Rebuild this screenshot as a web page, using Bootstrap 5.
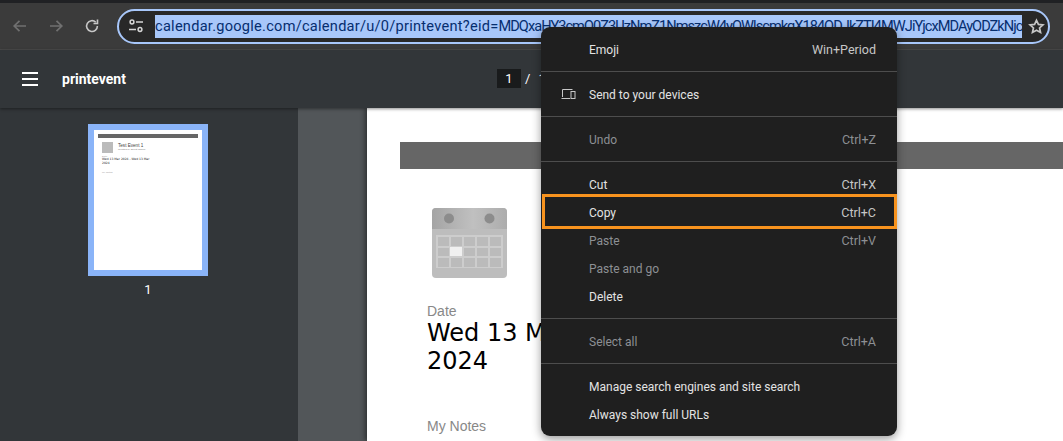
<!DOCTYPE html>
<html lang="en"><head><meta charset="utf-8"><title>printevent</title>
<link href="https://cdn.jsdelivr.net/npm/bootstrap@5.3.0/dist/css/bootstrap.min.css" rel="stylesheet">
<style>
html,body{height:441px;overflow:hidden;margin:0}
body{background:#323639;font-family:"Roboto","Open Sans",sans-serif;position:relative}
.top-strip{height:3px;background:#202124}
.chrome-bar{height:47px;background:#3b3b3b;border-bottom:1px solid #4a4a4a}
.nav-ic{width:40px;height:47px}
.omni{position:absolute;left:117px;top:9px;width:933px;height:35px;border:2px solid #a8c7fa;border-radius:18px;background:#282828}
.tune{position:absolute;left:10px;top:8px}
.url{position:absolute;left:36px;top:4px;width:867px;height:23px;background:#a8c7fa;color:#062e6f;font-size:14.6px;line-height:23px;white-space:nowrap;overflow:hidden;letter-spacing:.25px}
.url-tail{letter-spacing:-.97px}
.star{position:absolute;left:909px;top:7px}
.pdf-bar{height:58px;background:#323639;color:#fff;position:relative;z-index:1;box-shadow:0 1px 3px rgba(0,0,0,.45)}
.doc-title{font-weight:700;font-size:14px;margin-left:24px}
.pager{position:absolute;left:497px;top:69px;color:#fff;font-size:13px;line-height:19px;z-index:2}
.pg-box{width:24px;height:19px;background:#191b1c;text-align:center}
.main-row{height:333px}
.side{width:296px;margin-right:2px;background:#323639;color:#fff;padding-top:16px}
.thumb{width:120px;height:152px;border:6px solid #8ab4f8;background:#fff;padding:4px;line-height:1}
.thumb-head{height:4px;background:#666}
.thumb-body{display:flex;gap:5px;padding:4px 4px 0}
.thumb-ico{width:11px;height:11px;background:#bbb;flex:none}
.thumb-name{font:400 4.600px/5px "Liberation Sans",sans-serif;color:#444;margin-top:1px}
.thumb-sub{font:400 2.500px/3px "Liberation Sans",sans-serif;color:#777}
.thumb-lab{font:2.500px/3px "Liberation Sans",sans-serif;color:#999;padding:2px 4px 0}
.thumb-date{font:3px/3.600px "DejaVu Sans",sans-serif;color:#222;padding:0 40px 0 4px}
.thumb-note{font:2.500px/3px "Liberation Sans",sans-serif;color:#999;padding:6px 4px 0}
.thumb-num{font-size:13px;margin-top:4px}
.gutter{background:#525659;padding-left:69px}
.sheet{background:#fff;height:333px;box-shadow:-2px 0 5px rgba(0,0,0,.45);padding:34px 0 0 33px;color:#000}
.sheet-head{height:27px;background:#666}
.cal{margin:39px 0 0 32px;display:block}
.ev-label{font:14px/17px "Liberation Sans",sans-serif;color:#888;margin:25px 0 0 27px}
.ev-date{font:24px/28px "DejaVu Sans",sans-serif;color:#000;margin:-1px 0 0 27px;width:440px}
.notes{margin-top:43px}
.ctx{position:absolute;left:541px;top:27px;width:356px;height:409px;background:#1f1f1f;border-radius:9px;padding:8px 0;box-shadow:0 3px 10px rgba(0,0,0,.4);font-size:12px;color:#e3e3e3;z-index:3}
.ctx-item{height:28px;padding:2px 21px 0 48px;display:flex;justify-content:space-between;align-items:center;position:relative}
.ctx-key{color:#c7c7c7;font-size:12.500px}
.ctx-off{color:#8d9094}
.ctx-off .ctx-key{color:#8d9094}
.ctx-sep{height:1px;background:#4d4d4d;margin:8px 0}
.ctx-dev{position:absolute;left:20px;top:8px}
.hl{position:absolute;left:1px;top:167px;width:355px;height:35px;border:3px solid #f7931e;pointer-events:none}
</style></head>
<body>
<div class="top-strip"></div>
<div class="chrome-bar d-flex align-items-center">
  <div class="nav-ic d-flex align-items-center justify-content-center"><svg width="16" height="16" viewBox="0 0 16 16" fill="none" stroke="#707070" stroke-width="1.700"><path d="M14 8H2.500M7.500 2.800 2.200 8l5.300 5.200"/></svg></div>
  <div class="nav-ic d-flex align-items-center justify-content-center" style="margin-left:-4px"><svg width="16" height="16" viewBox="0 0 16 16" fill="none" stroke="#707070" stroke-width="1.700"><path d="M2 8h11.500M8.500 2.800 13.800 8l-5.300 5.200"/></svg></div>
  <div class="nav-ic d-flex align-items-center justify-content-center" style="margin-left:-4px"><svg width="16" height="16" viewBox="0 0 16 16" fill="none" stroke="#c7c7c7" stroke-width="1.600"><path d="M13.400 8a5.400 5.400 0 1 1-1.600-3.800"/><path d="M13.500 1.500v4h-4"/></svg></div>
</div>
<div class="omni">
  <svg class="tune" width="14" height="14" viewBox="0 0 14 14" fill="none" stroke="#d5d5d5" stroke-width="1.500"><circle cx="3" cy="3" r="1.900"/><path d="M7 3h7M0 10.500h7"/><circle cx="11" cy="10.500" r="1.900"/></svg>
  <div class="url">calendar.google.com/calendar/u/0/printevent?eid=<span class="url-tail">MDQxaHY3cmQ0Z3UzNmZ1NmszcW4yOWlscmkgX184ODJkZTI4MWJiYjcxMDAyODZkNjc</span></div>
  <svg class="star" width="17" height="17" viewBox="0 0 24 24" fill="none" stroke="#c7c7c7" stroke-width="2.400"><path d="M12 3.200l2.700 5.900 6.400.7-4.800 4.300 1.400 6.300L12 17.200l-5.700 3.200 1.400-6.300-4.800-4.300 6.400-.7z"/></svg>
</div>
<div class="pdf-bar d-flex align-items-center" style="padding-left:22px">
  <svg width="16" height="14" viewBox="0 0 16 14" fill="#fff"><rect width="16" height="2" y="0"/><rect width="16" height="2" y="6"/><rect width="16" height="2" y="12"/></svg>
  <span class="doc-title">printevent</span>
</div>
<div class="pager d-flex gap-1"><div class="pg-box">1</div><span>/</span><span class="ms-1">1</span></div>
<div class="main-row d-flex">
  <div class="side d-flex flex-column align-items-center">
    <div class="thumb">
      <div class="thumb-head"></div>
      <div class="thumb-body"><div class="thumb-ico"></div><div><div class="thumb-name">Test Event 1</div><div class="thumb-sub">Created by Event Owner</div></div></div>
      <div class="thumb-lab">Date</div>
      <div class="thumb-date">Wed 13 Mar 2024 - Wed 13 Mar 2024</div>
      <div class="thumb-note">My Notes</div>
    </div>
    <div class="thumb-num">1</div>
  </div>
  <div class="gutter flex-grow-1">
    <div class="sheet">
      <div class="sheet-head"></div>
      <svg class="cal" width="75" height="70" viewBox="0 0 75 70">
        <defs><linearGradient id="g" x1="0" y1="0" x2="1" y2="0"><stop offset="0" stop-color="#a4a4a4"/><stop offset=".55" stop-color="#c0c0c0"/><stop offset="1" stop-color="#acacac"/></linearGradient></defs>
        <rect width="75" height="70" rx="4" fill="#bdbdbd"/>
        <path d="M0 21V4a4 4 0 0 1 4-4h67a4 4 0 0 1 4 4v17z" fill="url(#g)"/>
        <circle cx="17" cy="10.500" r="5" fill="#8c8c8c"/><circle cx="57.500" cy="10.500" r="5" fill="#8c8c8c"/>
        <rect x="4" y="27" width="67" height="33" fill="#cdcdcd"/>
        <g fill="#bbbbbb">
          <rect x="6" y="29" width="11" height="9"/><rect x="19" y="29" width="11" height="9"/><rect x="32" y="29" width="11" height="9"/><rect x="45" y="29" width="11" height="9"/><rect x="58" y="29" width="11" height="9"/>
          <rect x="6" y="40" width="11" height="8"/><rect x="32" y="40" width="11" height="8"/><rect x="45" y="40" width="11" height="8"/><rect x="58" y="40" width="11" height="8"/>
          <rect x="6" y="50" width="11" height="9"/><rect x="19" y="50" width="11" height="9"/><rect x="32" y="50" width="11" height="9"/><rect x="45" y="50" width="11" height="9"/><rect x="58" y="50" width="11" height="9"/>
        </g>
        <rect x="18" y="39" width="12" height="9" fill="#f0f0f0"/>
      </svg>
      <div class="ev-label">Date</div>
      <div class="ev-date">Wed 13 Mar 2024 - Wed 13 Mar 2024</div>
      <div class="ev-label notes">My Notes</div>
    </div>
  </div>
</div>
<div class="ctx">
  <div class="ctx-item"><span>Emoji</span><span class="ctx-key">Win+Period</span></div>
  <div class="ctx-sep"></div>
  <div class="ctx-item"><svg class="ctx-dev" width="15" height="12" viewBox="0 0 15 12" fill="none" stroke="#c7c7c7" stroke-width="1"><path d="M1.500 9V1.500h10M.5 10.500h8.500"/><rect x="10" y="3.500" width="4" height="7"/></svg><span>Send to your devices</span></div>
  <div class="ctx-sep"></div>
  <div class="ctx-item ctx-off"><span>Undo</span><span class="ctx-key">Ctrl+Z</span></div>
  <div class="ctx-sep"></div>
  <div class="ctx-item"><span>Cut</span><span class="ctx-key">Ctrl+X</span></div>
  <div class="ctx-item"><span>Copy</span><span class="ctx-key">Ctrl+C</span></div>
  <div class="ctx-item ctx-off"><span>Paste</span><span class="ctx-key">Ctrl+V</span></div>
  <div class="ctx-item ctx-off"><span>Paste and go</span></div>
  <div class="ctx-item"><span>Delete</span></div>
  <div class="ctx-sep"></div>
  <div class="ctx-item ctx-off"><span>Select all</span><span class="ctx-key">Ctrl+A</span></div>
  <div class="ctx-sep"></div>
  <div class="ctx-item"><span>Manage search engines and site search</span></div>
  <div class="ctx-item"><span>Always show full URLs</span></div>
  <div class="hl"></div>
</div>
<script src="https://cdn.jsdelivr.net/npm/bootstrap@5.3.0/dist/js/bootstrap.bundle.min.js"></script>
</body></html>
